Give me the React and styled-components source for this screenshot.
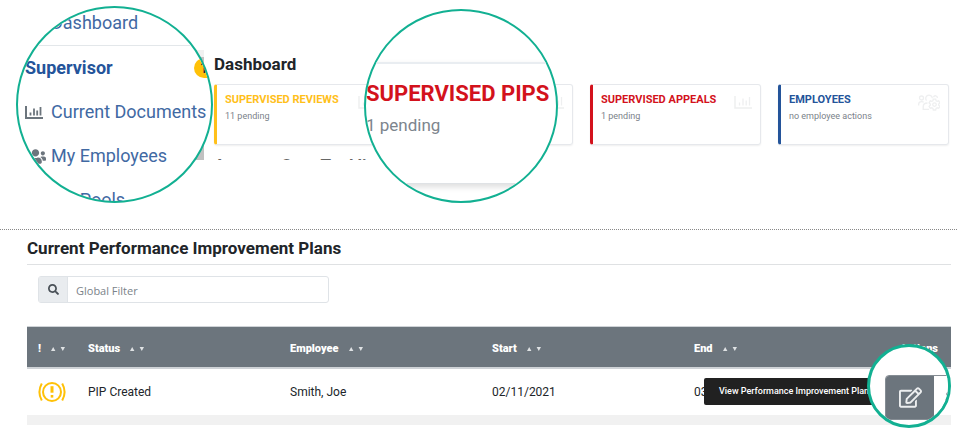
import { useState } from "react";
import styled, { createGlobalStyle, css } from "styled-components";
import { FaSearch, FaUsers, FaRegEdit } from "react-icons/fa";

const GlobalStyle = createGlobalStyle`
  * {
    box-sizing: border-box;
  }
  body {
    margin: 0;
    background: #fff;
    color: #212529;
    font-family: Roboto, "Liberation Sans", sans-serif;
    font-size: 12px;
  }
`;

const Page = styled.main`
  position: relative;
`;

const Top = styled.section`
  position: relative;
  padding: 51px 8px 68px 214px;
  border-bottom: 1px dotted #888;
`;

const Title = styled.h1`
  margin: 0;
  font-size: 17px;
  line-height: 27px;
  font-weight: 700;
`;

const Cards = styled.div`
  display: grid;
  grid-template-columns: repeat(4, 1fr);
  gap: 17px;
  margin-top: 6px;
`;

const Card = styled.article`
  display: flex;
  justify-content: space-between;
  height: 61px;
  padding: 7px 8px 0 8px;
  border: 1px solid #e6e8ec;
  border-left: 3px solid ${(props) => props.$color};
  border-radius: 3px;
  box-shadow: 0 1px 2px #0001;
  svg {
    flex: none;
    margin-top: 1px;
    color: #eeeff0;
  }
`;

const CardTitle = styled.h2`
  margin: 0;
  color: ${(props) => props.$color};
  font-size: 11px;
  line-height: 16px;
  font-weight: 700;
  white-space: nowrap;
`;

const CardText = styled.p`
  margin: 2px 0 0;
  color: #7b828a;
  font-size: 9px;
  line-height: 12px;
`;

const Cut = styled.h2`
  height: 1px;
  margin: 14px 0 1px;
  overflow: hidden;
  color: #666;
  font-size: 17px;
  line-height: 12px;
`;

const Lens = styled.div`
  position: absolute;
  top: ${(props) => props.$top}px;
  left: ${(props) => props.$left}px;
  width: ${(props) => props.$size}px;
  height: ${(props) => props.$size}px;
  border: ${(props) => props.$border || 2}px solid #12b092;
  border-radius: 50%;
  overflow: hidden;
  background: #fff;
`;

const ScrollBar = styled.span`
  position: absolute;
  top: 50px;
  left: 195px;
  width: 9px;
  height: 110px;
  background: #c1c1c1;
  border-top: 7px solid #f1f1f1;
`;

const Side = styled.nav`
  display: flex;
  flex-direction: column;
  padding-left: 7px;
  font-size: 18px;
  line-height: 24px;
`;

const SideLink = styled.a`
  display: flex;
  align-items: center;
  height: 44px;
  color: #4169a3;
  text-decoration: none;
  white-space: nowrap;
  ${(props) =>
    props.$first &&
    css`
      height: 38px;
      padding-bottom: 8px;
      border-bottom: 1px solid #e3e7ea;
    `}
`;

const SideIcon = styled.span`
  display: flex;
  flex: none;
  width: 26px;
  color: #6c757d;
`;

const SideHead = styled.h2`
  display: flex;
  align-items: center;
  justify-content: space-between;
  height: 44px;
  margin: 0;
  color: #24549a;
  font-size: 18px;
`;

const Count = styled.span`
  width: 28px;
  height: 20px;
  margin-right: -11px;
  padding-left: 6px;
  border-radius: 10px;
  background: #ffc107;
  color: #212529;
  font-size: 14px;
  line-height: 20px;
`;

const BigCard = styled.div`
  height: 122px;
  margin-top: 51px;
  padding-top: 14px;
  border-top: 2px solid #e9edf1;
  border-bottom: 1px solid #dfe2e5;
  box-shadow: 0 3px 6px #0002;
`;

const BigTitle = styled.h2`
  margin: 0;
  color: #d3121c;
  font-size: 22px;
  line-height: 32px;
  white-space: nowrap;
`;

const BigText = styled.p`
  margin: 3px 0 0;
  color: #7d858d;
  font-size: 17px;
  line-height: 24px;
`;

const Plans = styled.section`
  padding: 5px 6px 10px 27px;
`;

const PlansTitle = styled(Title)`
  height: 30px;
  border-bottom: 1px solid #dfe1e3;
`;

const Filter = styled.div`
  display: flex;
  width: 291px;
  height: 27px;
  margin: 11px 0 23px 11px;
  border: 1px solid #dfe3e7;
  border-radius: 3px;
  label {
    display: flex;
    align-items: center;
    justify-content: center;
    width: 29px;
    border-right: 1px solid #dfe3e7;
    background: #e9ecef;
    color: #495057;
  }
  input {
    flex: 1;
    min-width: 0;
    padding: 2px 8px 0;
    border: 0;
    outline: 0;
    background: none;
    color: #495057;
    font: 11px "Open Sans", "Noto Sans", sans-serif;
  }
  input::placeholder {
    color: #7b838a;
  }
`;

const TableWrap = styled.div`
  position: relative;
`;

const Table = styled.table`
  width: 100%;
  table-layout: fixed;
  border-collapse: separate;
  border-spacing: 0;
`;

const Th = styled.th`
  width: ${(props) => props.$width || "auto"};
  height: 43px;
  padding: 3px ${(props) => (props.$right ? 13 : 0)}px 0 11px;
  border-top: 1px solid #cfd3d7;
  border-bottom: 2px solid #cfd3d7;
  background: #6c757d;
  color: #fff;
  font-size: 11px;
  font-weight: 900;
  text-align: ${(props) => (props.$right ? "right" : "left")};
  white-space: nowrap;
`;

const Sort = styled.button`
  display: inline-flex;
  gap: 5px;
  margin-left: 10px;
  padding: 0;
  border: 0;
  background: none;
  color: #dfe2e4;
  vertical-align: middle;
`;

const Td = styled.td`
  height: 46px;
  padding: 0 0 0 11px;
  font-size: 12px;
  svg {
    display: block;
  }
`;

const Stripe = styled.td`
  height: 10px;
  padding: 0;
  background: #f1f1f1;
`;

const Tip = styled.div`
  position: absolute;
  top: 52px;
  right: 76px;
  width: 171px;
  height: 27px;
  padding-left: 15px;
  border-radius: 2px;
  background: #212121;
  color: #fff;
  font-size: 9px;
  font-weight: 500;
  line-height: 27px;
  white-space: nowrap;
  overflow: hidden;
`;

const ZoomedActions = styled(Lens)`
  left: auto;
  right: 0;
`;

const Actions = styled.div`
  display: flex;
  width: 98px;
  height: 45px;
  margin: 28px 0 0 15px;
  border: 1px solid #858d94;
  border-radius: 4px;
`;

const ActionButton = styled.button`
  display: flex;
  align-items: center;
  justify-content: center;
  flex: none;
  width: 48px;
  padding: 0;
  border: 0;
  border-radius: 3px 0 0 3px;
  background: ${(props) => (props.$active ? "#6c757d" : "#fff")};
  color: ${(props) => (props.$active ? "#eceeef" : "#6c757d")};
`;

const cards = [
  { title: "SUPERVISED REVIEWS", text: "11 pending", color: "#ffc01a" },
  { title: "SUPERVISED PIPS", text: "1 pending", color: "#d3121c" },
  { title: "SUPERVISED APPEALS", text: "1 pending", color: "#d3121c" },
  { title: "EMPLOYEES", text: "no employee actions", color: "#24549a", people: true },
];

const columns = [
  { name: "!", width: "50px" },
  { name: "Status" },
  { name: "Employee" },
  { name: "Start" },
  { name: "End" },
];

function ChartIcon({ bold }) {
  return (
    <svg width="18" height="18" viewBox="0 0 18 18" fill="none" stroke="currentColor">
      <path d="M1 3v12h17" strokeWidth={bold ? 2 : 1.5} />
      <path d="M5.5 9.5v3M9 5.5v7M12.2 7.5v5M15.5 4v8.5" strokeWidth={bold ? 1.8 : 1.3} />
    </svg>
  );
}

function TeamIcon() {
  return (
    <svg width="22" height="18" viewBox="0 0 22 18" fill="none" stroke="currentColor" strokeWidth="1.3">
      <circle cx="3.5" cy="5" r="2" />
      <path d="M.7 12.5V11q0-2.3 3-2.3 1.2 0 2 .6" />
      <path d="M8.5 7.6a3.3 3.3 0 1 1 5.8-2.4" />
      <path d="M15.5 4.2a2 2 0 0 1 3.9.8" />
      <path d="M11 16.4H5.2v-2.6q0-3.8 4.3-3.8" />
      <path d="M15.3 6.2h2.4l.4 1.6 1.1.6 1.5-.5 1.2 2-1.2 1.1v1.2l1.2 1.1-1.2 2-1.5-.5-1.1.6-.4 1.6h-2.4l-.4-1.6-1.1-.6-1.5.5-1.2-2 1.2-1.1V11l-1.2-1.1 1.2-2 1.5.5 1.1-.6z" />
      <circle cx="16.5" cy="11.6" r="1.8" />
    </svg>
  );
}

function WarningIcon() {
  return (
    <svg width="28" height="22" viewBox="0 0 28 22" fill="none" stroke="#ffc107" strokeWidth="2">
      <circle cx="14" cy="11" r="9" />
      <path d="M3.8 2.5Q-1 11 3.8 19.5M24.2 2.5Q29 11 24.2 19.5" />
      <path d="M14 5.2v6.5" strokeWidth="3" />
      <path d="M14 14v2.6" strokeWidth="2.6" />
    </svg>
  );
}

function SortArrows({ name }) {
  return (
    <Sort aria-label={`Sort by ${name}`}>
      <svg width="14" height="4" viewBox="0 0 14 4" fill="currentColor">
        <path d="M0 4h4.4L2.2 0zM9.6 0H14l-2.2 4z" />
      </svg>
    </Sort>
  );
}

export default function App() {
  const [filter, setFilter] = useState("");

  return (
    <Page>
      <GlobalStyle />
      <Top>
        <Title>Dashboard</Title>
        <Cards>
          {cards.map((card) => (
            <Card key={card.title} $color={card.color}>
              <div>
                <CardTitle $color={card.color}>{card.title}</CardTitle>
                <CardText>{card.text}</CardText>
              </div>
              {card.people ? <TeamIcon /> : <ChartIcon />}
            </Card>
          ))}
        </Cards>
        <Cut>Average Core Tool list</Cut>

        <ScrollBar />
        <Lens $top={6} $left={16} $size={197}>
          <Side>
            <SideLink href="#dashboard" $first>
              <SideIcon />
              Dashboard
            </SideLink>
            <SideHead>
              Supervisor <Count>1</Count>
            </SideHead>
            <SideLink href="#documents">
              <SideIcon><ChartIcon bold /></SideIcon>
              Current Documents
            </SideLink>
            <SideLink href="#employees">
              <SideIcon><FaUsers size={21} /></SideIcon>
              My Employees
            </SideLink>
            <SideLink href="#pools">
              <SideIcon />
              My Pools
            </SideLink>
          </Side>
        </Lens>

        <Lens $top={9} $left={364} $size={194}>
          <BigCard>
            <BigTitle>SUPERVISED PIPS</BigTitle>
            <BigText>1 pending</BigText>
          </BigCard>
        </Lens>
      </Top>

      <Plans>
        <PlansTitle as="h2">Current Performance Improvement Plans</PlansTitle>
        <Filter>
          <label htmlFor="filter" aria-label="Global Filter">
            <FaSearch size={11} />
          </label>
          <input
            id="filter"
            placeholder="Global Filter"
            value={filter}
            onChange={(ev) => setFilter(ev.target.value)}
          />
        </Filter>
        <TableWrap>
          <Table>
            <thead>
              <tr>
                {columns.map((col) => (
                  <Th key={col.name} $width={col.width}>
                    {col.name}
                    <SortArrows name={col.name} />
                  </Th>
                ))}
                <Th $width="66px" $right>Actions</Th>
              </tr>
            </thead>
            <tbody>
              <tr>
                <Td><WarningIcon /></Td>
                <Td>PIP Created</Td>
                <Td>Smith, Joe</Td>
                <Td>02/11/2021</Td>
                <Td>03/11/2021</Td>
                <Td />
              </tr>
              <tr>
                <Stripe colSpan={6} />
              </tr>
            </tbody>
          </Table>
          <Tip role="tooltip">View Performance Improvement Plan</Tip>
          <ZoomedActions $top={18} $size={84} $border={3}>
            <Actions>
              <ActionButton $active aria-label="View Performance Improvement Plan">
                <FaRegEdit size={23} />
              </ActionButton>
              <ActionButton aria-label="My Employees">
                <FaUsers size={26} />
              </ActionButton>
            </Actions>
          </ZoomedActions>
        </TableWrap>
      </Plans>
    </Page>
  );
}
